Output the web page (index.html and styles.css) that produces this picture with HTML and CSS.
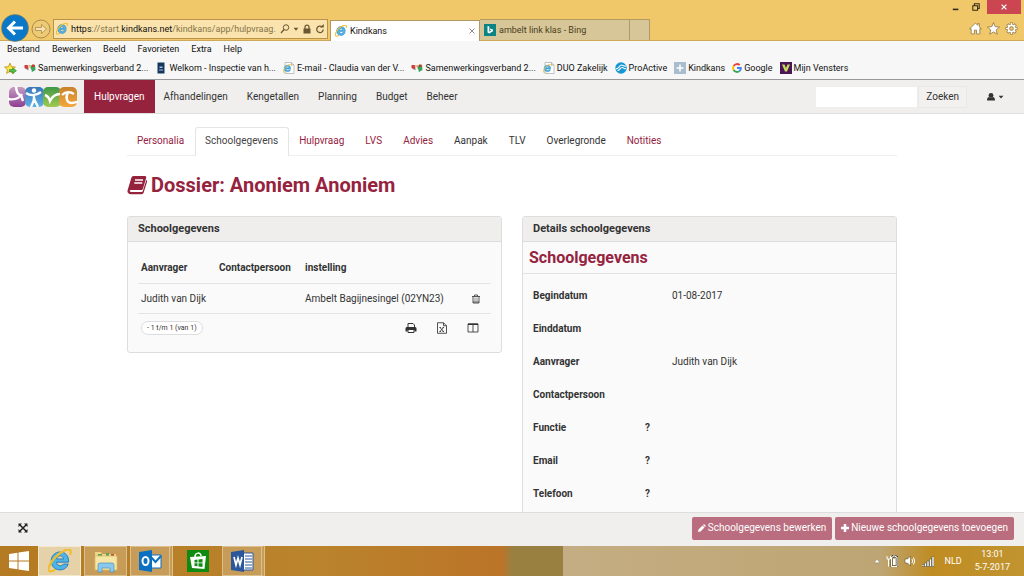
FILE: index.html
```html
<!DOCTYPE html>
<html lang="nl">
<head>
<meta charset="utf-8">
<title>Kindkans</title>
<link rel="stylesheet" href="styles.css">
</head>
<body>
<svg class="defs" aria-hidden="true">
  <symbol id="ie" viewBox="2 2 21 21">
    <path d="M20 13.500H9.500c.2 2 1.500 3.200 3.200 3.200 1.300 0 2.200-.5 2.800-1.500h4.200C18.600 18.500 16 20.300 12.600 20.300 8 20.300 4.800 17 4.800 12.500S8.100 4.600 12.600 4.600c4.800 0 7.700 3.500 7.400 8.900zM9.600 10.700h6c-.2-1.700-1.400-2.700-3-2.700s-2.700 1-3 2.700z" fill="#4db4e8" stroke="#1f79bd" stroke-width=".8"/>
    <path d="M21.500 6.500c1.500-3.500-.5-5.300-4.500-3.500C10 6 4 13 2.600 18.300c-.8 3.300 1.600 4.300 5.400 2" fill="none" stroke="#f2bd2c" stroke-width="1.900" stroke-linecap="round"/>
  </symbol>
  <symbol id="page-ie" viewBox="0 0 24 24">
    <path d="M4 1h13l5 5v17H4z" fill="#fff" stroke="#888"/>
    <path d="M17 1v5h5" fill="#ddd" stroke="#888"/>
    <use href="#ie" x="0" y="4" width="18" height="18"/>
  </symbol>
  <symbol id="swv" viewBox="0 0 24 24">
    <path d="M1 6h7l2 6-4 3-5-3z" fill="#d43a3a"/><path d="M7 6h8l-2 8-4-2z" fill="#e8b98a"/><path d="M14 7l8-1 1 10-7 4-3-6z" fill="#39a35c"/><path d="M3 13l4-1 3 5z" fill="#777"/><path d="M16 5h5v5h-5z" fill="#c33"/><path d="M9 9l6 8" stroke="#fff" stroke-width="2"/>
  </symbol>
</svg>

<header class="browser">
  <div class="titlebar">
    <button class="back" aria-label="Vorige"><svg viewBox="0 0 28 28"><circle cx="14" cy="14" r="13.500" fill="#0a78c8" stroke="#8a7a4a" stroke-width=".6"/><path d="M22 14H8M14 7.500L7.500 14l6.500 6.500" fill="none" stroke="#fff" stroke-width="3"/></svg></button>
    <button class="forward" aria-label="Volgende"><svg viewBox="0 0 20 20"><circle cx="10" cy="10" r="9" fill="#efca74" stroke="#a98b4a"/><path d="M4.500 8.500h6V5.500l5 4.500-5 4.500v-3h-6z" fill="#f7e2b0" stroke="#a98b4a" stroke-width=".8"/></svg></button>
    <div class="address">
      <svg class="i12"><use href="#ie"/></svg>
      <span class="url"><b>https</b>://start.<b>kindkans.net</b>/kindkans/app/hulpvraag.</span>
      <svg class="i10" viewBox="0 0 20 20"><circle cx="12" cy="7" r="5.500" fill="none" stroke="#6a5630" stroke-width="2"/><path d="M8 11l-6 7" stroke="#6a5630" stroke-width="2.500"/></svg>
      <svg class="i6" viewBox="0 0 10 10"><path d="M1 3h8L5 8z" fill="#6a5630"/></svg>
      <svg class="i10" viewBox="0 0 20 20"><path d="M3 9h14v10H3z" fill="#6a5630"/><path d="M6 10V6a4 4 0 018 0v4" fill="none" stroke="#6a5630" stroke-width="2.500"/></svg>
      <svg class="i10" viewBox="0 0 20 20"><path d="M16.500 11a6.500 6.500 0 11-2.500-5.500" fill="none" stroke="#6a5630" stroke-width="2.500"/><path d="M10 7h7.500V0z" fill="#6a5630"/></svg>
    </div>
    <div class="btab current"><svg class="i12"><use href="#ie"/></svg><span>Kindkans</span><button aria-label="Tabblad sluiten"><svg class="i6" viewBox="0 0 10 10"><path d="M1 1l8 8M9 1L1 9" stroke="#888" stroke-width="1.600"/></svg></button></div>
    <div class="btab"><svg class="i12" viewBox="0 0 24 24"><path d="M0 0h24v24H0z" fill="#0c8484"/><path d="M7 4l3.500 1.200v10L15 13l-2.500-1-1.200-3.200L18 11v3.500L10.500 19 7 17z" fill="#fff"/></svg><span>ambelt link klas - Bing</span></div>
    <button class="newtab" aria-label="Nieuw tabblad"></button>
    <div class="window">
      <div class="wbuttons">
        <button aria-label="Minimaliseren"><svg class="i8" viewBox="0 0 10 10"><path d="M1 8h7" stroke="#332a18" stroke-width="2"/></svg></button>
        <button aria-label="Vorig formaat"><svg class="i8" viewBox="0 0 10 10"><path d="M1 3.500h6v5.500H1zM3 3V1h6v6H7.500" fill="none" stroke="#332a18" stroke-width="1.300"/></svg></button>
        <button class="close" aria-label="Sluiten"><svg class="i8" viewBox="0 0 10 10"><path d="M2 2l6 6M8 2L2 8" stroke="#fff" stroke-width="1.500"/></svg></button>
      </div>
      <div class="tools">
        <svg class="i13" viewBox="0 0 24 24"><path d="M12 2L1 12.500h3V22h6v-7h4v7h6v-9.500h3L19 9V3h-3v3z" fill="#fff" stroke="#8c7644" stroke-width="1.500"/></svg>
        <svg class="i13" viewBox="0 0 24 24"><path d="M12 1l3.200 7.700 8 .6-6.200 5.300 2 8L12 18.300 5 22.600l2-8L.8 9.300l8-.6z" fill="#fff" stroke="#8c7644" stroke-width="1.500"/></svg>
        <svg class="i13" viewBox="0 0 24 24"><g fill="none"><path d="M12 1v22M1 12h22M4.200 4.200l15.600 15.600M19.800 4.200L4.200 19.800" stroke="#8c7644" stroke-width="5.500"/><path d="M12 2v20M2 12h20M5 5l14 14M19 5L5 19" stroke="#fff" stroke-width="3"/></g><circle cx="12" cy="12" r="7" fill="#fff"/><circle cx="12" cy="12" r="3.500" fill="#f0c869" stroke="#8c7644" stroke-width="1.500"/></svg>
      </div>
    </div>
  </div>
  <div class="menubar"><button>Bestand</button><button>Bewerken</button><button>Beeld</button><button>Favorieten</button><button>Extra</button><button>Help</button></div>
  <div class="favorites">
    <svg class="i13" viewBox="0 0 24 24"><path d="M11 2l2.800 6.700 7.200.6-5.500 4.700 1.700 7L11 17.300 4.800 21l1.700-7L1 9.300l7.200-.6z" fill="#ffe84a" stroke="#c28a10" stroke-width="1.500"/><path d="M10 14h6v-3.500l7 5.500-7 5.500V18h-6z" fill="#52c04a" stroke="#1f8020"/></svg>
    <a href="#"><svg class="i12"><use href="#swv"/></svg>Samenwerkingsverband 2...</a>
    <a href="#"><svg class="i12" viewBox="0 0 24 24"><path d="M5 1h14v22H5z" fill="#17365f"/><path d="M9 9h6v3H9zM8 15h8v2H8z" fill="#a9c1dc"/></svg>Welkom - Inspectie van h...</a>
    <a href="#"><svg class="i12"><use href="#page-ie"/></svg>E-mail - Claudia van der V...</a>
    <a href="#"><svg class="i12"><use href="#swv"/></svg>Samenwerkingsverband 2...</a>
    <a href="#"><svg class="i12"><use href="#page-ie"/></svg>DUO Zakelijk</a>
    <a href="#"><svg class="i12" viewBox="0 0 24 24"><circle cx="12" cy="12" r="11.500" fill="#1597d4"/><path d="M1 14c7 0 8-8 12-8 3 0 4 3 9 2M5 17c5 0 5-6 9-6s3 4 8 2" fill="none" stroke="#fff" stroke-width="2.200"/></svg>ProActive</a>
    <a href="#"><svg class="i12" viewBox="0 0 24 24"><path d="M0 0h24v24H0z" fill="#a9bccb"/><path d="M12 5v14M5 12h14" stroke="#fff" stroke-width="3"/></svg>Kindkans</a>
    <a href="#"><svg class="i10" viewBox="0 0 24 24"><g fill="none" stroke-width="4.500"><path d="M4 7a9.500 9.500 0 0114.500-2" stroke="#ea4335"/><path d="M4 7a10 10 0 000 10" stroke="#fbbc05"/><path d="M4 17a9.500 9.500 0 0014 2.500" stroke="#34a853"/><path d="M18 19.500a9 9 0 003.300-7.500H12" stroke="#4285f4"/></g></svg>Google</a>
    <a href="#"><svg class="i12" viewBox="0 0 24 24"><path d="M0 0h24v24H0z" fill="#4b1556"/><path d="M4 5h5l3 7 3-7h5l-6 14h-4z" fill="#c6dc58"/></svg>Mijn Vensters</a>
  </div>
</header>

<nav class="mainnav">
  <a class="logo" href="#" aria-label="Kindkans"><svg viewBox="0 0 70 22">
    <defs>
      <linearGradient id="g1" x2="0" y2="1"><stop stop-color="#c49cc0"/><stop offset="1" stop-color="#8d3f92"/></linearGradient>
      <linearGradient id="g2" x2="0" y2="1"><stop stop-color="#3a76bb"/><stop offset="1" stop-color="#5cb2e6"/></linearGradient>
      <linearGradient id="g3" x2="0" y2="1"><stop stop-color="#3f9848"/><stop offset="1" stop-color="#a0cb50"/></linearGradient>
      <linearGradient id="g4" x2="0" y2="1"><stop stop-color="#c9812c"/><stop offset="1" stop-color="#f3a83c"/></linearGradient>
    </defs>
    <rect x="1" y="1" width="17" height="20" rx="5" fill="url(#g1)"/><rect x="17" y="1" width="19" height="20" rx="5" fill="url(#g2)"/><rect x="35" y="1" width="18" height="20" rx="5" fill="url(#g3)"/><rect x="51" y="1" width="18" height="20" rx="5" fill="url(#g4)"/>
    <g fill="none" stroke="#fff" stroke-width="2.400"><path d="M8 0c0 5 2 9 6 10M0 13c6 1 11 0 14-5M13 9l2 6"/><path d="M18 7c4 3 10 3 15-1M26 9v5M26 12c0 4-2 6-3 9M26 12c1 4 3 6 4 9"/><path d="M37 9c3 1 4 3 5 6 2-4 6-7 10-7"/><path d="M54 9c4-4 9-3 12-1M60 7c-3 4-1 10 3 10 3 0 5-1 7-1"/></g><circle cx="26" cy="4.500" r="2.200" fill="#fff"/>
  </svg></a>
  <a class="active" href="#">Hulpvragen</a><a href="#">Afhandelingen</a><a href="#">Kengetallen</a><a href="#">Planning</a><a href="#">Budget</a><a href="#">Beheer</a>
  <form class="search"><input type="text" aria-label="Zoekterm"><button type="button">Zoeken</button></form>
  <button class="user" aria-label="Gebruiker"><svg class="i8" viewBox="0 0 20 20"><circle cx="10" cy="6" r="6" fill="#333"/><path d="M0 19c0-6 2-9 5-9 2 2 8 2 10 0 3 0 5 3 5 9z" fill="#333"/></svg><svg class="i6" viewBox="0 0 10 10"><path d="M1 3h8L5 7.500z" fill="#333"/></svg></button>
</nav>

<main>
  <div class="container">
    <nav class="tabs"><a href="#">Personalia</a><a class="selected" href="#">Schoolgegevens</a><a href="#">Hulpvraag</a><a href="#">LVS</a><a href="#">Advies</a><a class="dark" href="#">Aanpak</a><a class="dark" href="#">TLV</a><a class="dark" href="#">Overlegronde</a><a href="#">Notities</a></nav>
    <h1><svg viewBox="0 0 20 20"><path d="M6.500 1h11.200c1.300 0 1.800.9 1.500 2l-3.200 10.500c-.3 1-1 1.500-2 1.500H4c-1 0-1.400.5-1.200 1.200.2.600.8.800 1.600.8h10.200c.7 0 1-.3 1.200-.9L19.300 5c1 .4.900 1.200.7 2l-3.300 10.500c-.3 1-1.100 1.700-2.200 1.700H3.800C1.500 19.200 0 17.200.6 15.300L4.300 3C4.700 1.800 5.400 1 6.500 1z" fill="#96233e"/><path d="M8 5h8M7.300 8h8" stroke="#fff" stroke-width="1.300"/></svg>Dossier: Anoniem Anoniem</h1>
    <div class="panels">
      <section class="panel">
        <h2>Schoolgegevens</h2>
        <div class="listing">
          <table>
            <thead><tr><th class="c1">Aanvrager</th><th class="c2">Contactpersoon</th><th>instelling</th><th class="c4"></th></tr></thead>
            <tbody><tr><td>Judith van Dijk</td><td></td><td>Ambelt Bagijnesingel (02YN23)</td><td><button aria-label="Verwijderen"><svg class="i10" viewBox="0 0 20 20"><path d="M2 5h16M7 5V2h6v3M4 5v13h12V5M4 16h12" fill="none" stroke="#444" stroke-width="1.800"/><path d="M8 7v8M12 7v8" stroke="#444" stroke-width="1.200"/></svg></button></td></tr></tbody>
          </table>
          <div class="tablefoot">
            <span class="pager">- 1 t/m 1 (van 1)</span>
            <button aria-label="Afdrukken"><svg class="i12" viewBox="0 0 24 24"><path d="M6 11V3h10l3 3v5" fill="none" stroke="#333" stroke-width="2"/><path d="M3 10h18l2 2v7h-4v-3H5v3H1v-7z" fill="#333"/><path d="M6 16v5h12v-5" fill="#fff" stroke="#333" stroke-width="2"/></svg></button>
            <button aria-label="Exporteren naar Excel"><svg class="i12" viewBox="0 0 24 24"><path d="M3 1.500h12l6 6v15H3zM15 1.500v6h6M8 11l7 8M15 11l-7 8M7 11h3M13 11h3M7 19h3M13 19h3" fill="none" stroke="#333" stroke-width="1.700"/></svg></button>
            <button aria-label="Kolommen"><svg class="i12" viewBox="0 0 24 24"><path d="M2 4h20v16H2zM12 4v16" fill="none" stroke="#333" stroke-width="1.700"/><path d="M2 4.500h20" stroke="#333" stroke-width="3"/></svg></button>
          </div>
        </div>
      </section>
      <section class="panel">
        <h2>Details schoolgegevens</h2>
        <h3>Schoolgegevens</h3>
        <dl>
          <div><dt>Begindatum</dt><dd>01-08-2017</dd></div>
          <div><dt>Einddatum</dt><dd></dd></div>
          <div><dt>Aanvrager</dt><dd>Judith van Dijk</dd></div>
          <div><dt>Contactpersoon</dt><dd></dd></div>
          <div><dt>Functie<span>?</span></dt><dd></dd></div>
          <div><dt>Email<span>?</span></dt><dd></dd></div>
          <div><dt>Telefoon<span>?</span></dt><dd></dd></div>
        </dl>
      </section>
    </div>
  </div>
</main>

<footer class="actions">
  <button class="expand" aria-label="Volledig scherm"><svg class="i10" viewBox="0 0 20 20"><path d="M4 4l12 12M16 4L4 16" stroke="#222" stroke-width="3"/><path d="M1 1h7L1 8zM19 1v7l-7-7zM1 19v-7l7 7zM19 19h-7l7-7z" fill="#222"/></svg></button>
  <button class="primary"><svg class="i8" viewBox="0 0 16 16"><path d="M0 16l1-5 8-8 4 4-8 8zM10 2l1.500-1.500c1-1 4 2 4 3.500L14 6z" fill="#fff"/></svg>Schoolgegevens bewerken</button>
  <button class="primary"><svg class="i8" viewBox="0 0 16 16"><path d="M8 0v16M0 8h16" stroke="#fff" stroke-width="5"/></svg>Nieuwe schoolgegevens toevoegen</button>
</footer>

<footer class="taskbar">
  <button class="start" aria-label="Start"><svg viewBox="0 0 20 20"><path d="M0 3l8.500-1.200v7.700H0zM9.500 1.600L20 0v9.500H9.500zM0 10.500h8.500v7.700L0 17zM9.500 10.500H20V20L9.500 18.400z" fill="#fff"/></svg></button>
  <button class="app front" aria-label="Internet Explorer"><svg><use href="#ie"/></svg></button>
  <button class="app open" aria-label="Verkenner"><svg viewBox="0 0 24 24"><path d="M1 3h6l1 2h14v15H1z" fill="#edd486"/><path d="M4 5h4v2H4zM12 4h3v3h-3z" fill="#5fa264"/><path d="M17 5h3v3h-3z" fill="#b8503c"/><path d="M1 7h22v14H1z" fill="#f5e6a5" stroke="#d9bd62" stroke-width=".8"/><path d="M4 23v-7q0-2 2-2h12q2 0 2 2v7h-4v-4H8v4z" fill="#8cc8ec" stroke="#4c8fc1" stroke-width=".7"/></svg></button>
  <button class="app open stack" aria-label="Outlook"><svg viewBox="0 0 24 24"><path d="M12 6h11v13H12z" fill="#fff" stroke="#0b6fc2"/><path d="M12 7l5.500 6L23 7" fill="none" stroke="#0b6fc2" stroke-width="2"/><path d="M1 3l13-2v22L1 21z" fill="#0b6fc2"/><ellipse cx="7.500" cy="12" rx="3" ry="4" fill="none" stroke="#fff" stroke-width="2"/></svg></button>
  <button class="app" aria-label="Store"><svg viewBox="0 0 24 24"><path d="M1 1h22v22H1z" fill="#108a10"/><path d="M4 8l16-1-1.500 13L6 19z" fill="#fff"/><path d="M9 8c0-5 6-5 6-1" fill="none" stroke="#fff" stroke-width="1.500"/><path d="M8.500 11l3-.4v2.900h-3zM12.500 10.500l4-.5v3.500h-4zM8.500 14.300h3v3l-3-.4zM12.500 14.300h4v3.600l-4-.5z" fill="#108a10"/></svg></button>
  <button class="app open stack" aria-label="Word"><svg viewBox="0 0 24 24"><path d="M12 4h11v17H12z" fill="#fff" stroke="#2b579a"/><path d="M15 7h7M15 10h7M15 13h7M15 16h7M15 19h7" stroke="#2b579a"/><path d="M1 3l13-2v22L1 21z" fill="#2b579a"/><path d="M4 8l2 8 2-7 2 7 2-8" fill="none" stroke="#fff" stroke-width="1.700"/></svg></button>
  <div class="tray">
    <svg class="i6" viewBox="0 0 10 10"><path d="M0 8h10L5 2z" fill="#fff" stroke="#665" stroke-width=".6"/></svg>
    <svg class="i12" viewBox="0 0 24 24"><path d="M11 4h3V2h5v2h3v19H11z" fill="none" stroke="#443" stroke-width="4"/><path d="M11 4h3V2h5v2h3v19H11zM5 12v11M2 2v6h7V2M5 8v5" fill="none" stroke="#fff" stroke-width="2"/><path d="M14 7h5v13h-5z" fill="#fff"/></svg>
    <svg class="i12" viewBox="0 0 24 24"><path d="M2 8h5l6-6v20l-6-6H2z" fill="#fff" stroke="#443"/><path d="M16 8q3 4 0 8M19 5q5 7 0 14" fill="none" stroke="#fff" stroke-width="2"/></svg>
    <svg class="i12" viewBox="0 0 24 24"><path d="M0 19h4v4H0zM5 16h4v7H5zM10 12h4v11h-4zM15 8h4v15h-4zM20 3h4v20h-4z" fill="#fff" stroke="#554" stroke-width="1.200"/></svg>
    <span class="lang">NLD</span>
    <time>13:01<br>5-7-2017</time>
  </div>
</footer>
</body>
</html>
```
FILE: styles.css
```css
* { box-sizing: border-box; }
body { margin: 0; height: 100vh; display: flex; flex-direction: column; overflow: hidden; background: #fff; color: #333; font: 10px/16px Roboto, "Noto Sans", sans-serif; }
button { font: inherit; color: inherit; background: none; border: 0; padding: 0; display: flex; align-items: center; justify-content: center; }
a { color: inherit; text-decoration: none; }
svg { display: block; flex: none; }
.defs { position: absolute; width: 0; height: 0; }
.i6 { width: 6px; height: 6px; }
.i8 { width: 8px; height: 8px; }
.i10 { width: 10px; height: 10px; }
.i12 { width: 12px; height: 12px; }
.i13 { width: 13px; height: 13px; }

.browser { flex: none; background: #f7f7f7; border-bottom: 1px solid #999; font-size: 9px; line-height: 12px; color: #111; }
.titlebar { display: flex; align-items: flex-end; height: 41px; background: #f0c869; border-bottom: 1px solid #cfa95a; padding: 0 3px 0 1px; }
.back svg { width: 28px; height: 28px; }
.back { margin-bottom: -2px; }
.forward svg { width: 20px; height: 20px; }
.forward { margin: 0 2px 1px; }
.address { display: flex; align-items: center; gap: 3px; width: 275px; height: 20px; margin: 0 2px 1px 0; padding: 0 2px; border: 1px solid #b9924c; background: #fae3ad; }
.url { flex: 1; white-space: nowrap; color: #857549; }
.url b { font-weight: 400; color: #111; }
.btab { display: flex; align-items: center; gap: 3px; width: 150px; height: 21px; padding: 0 4px; background: #d7c697; border: 1px solid #b39a62; border-left-width: 0; border-bottom: 0; color: #4a3e22; }
.btab.current { background: #fff; color: #111; margin-bottom: -1px; border-left-width: 1px; }
.btab button { margin-left: auto; }
.newtab { width: 20px; height: 21px; background: #d7c697; border: 1px solid #b39a62; border-width: 1px 1px 0 0; }
.window { margin-left: auto; align-self: stretch; display: flex; flex-direction: column; align-items: flex-end; justify-content: space-between; }
.wbuttons { display: flex; align-items: center; gap: 12px; }
.wbuttons .close { width: 34px; height: 14px; background: #cb4650; margin-left: -5px; }
.tools { display: flex; gap: 5px; padding: 0 3px 5px 0; }
.menubar { display: flex; gap: 12px; padding: 2px 7px 0; }
.favorites { display: flex; align-items: center; gap: 7px; height: 24px; padding: 2px 4px 0; white-space: nowrap; }
.favorites a { display: flex; align-items: center; gap: 2px; }

.mainnav { flex: none; display: flex; align-items: stretch; height: 34px; background: #f0efee; border-bottom: 1px solid #e0e0e0; }
.mainnav > a { display: flex; align-items: center; padding: 0 10px 0 9px; }
.mainnav > .logo { padding: 0 6px 0 8px; }
.logo svg { width: 70px; height: 22px; }
.mainnav > .active { background: #96233e; color: #fff; padding: 0 10px; }
.search { display: flex; align-items: center; margin-left: auto; }
.search input { width: 103px; height: 22px; border: 1px solid #eee; background: #fff; }
.search button { height: 22px; padding: 0 7px; border: 1px solid #e8e8e8; background: #f2f1f0; }
.user { gap: 3px; padding: 0 20px; }

main { flex: 1; min-height: 0; overflow: hidden; }
.container { width: calc(75% + 2px); margin: 0 auto; padding-top: 13px; }
.tabs { display: flex; border-bottom: 1px solid #eee; color: #96233e; }
.tabs a { padding: 5px 10px 6px 9px; border: 1px solid transparent; border-bottom: 0; }
.tabs .dark { color: #333; }
.tabs .selected { color: #444; background: #fff; border-color: #e4e4e4; border-radius: 3px 3px 0 0; margin-bottom: -1px; }
h1, h2, h3, dl, dd { margin: 0; }
h1 { display: flex; align-items: center; gap: 4px; margin: 14px 0 16px; font-size: 20px; line-height: 30px; color: #96233e; }
h1 svg { width: 20px; height: 20px; }
.panels { display: grid; grid-template-columns: 1fr 1fr; gap: 20px; align-items: start; }
.panel { background: #fafafa; border: 1px solid #ddd; border-radius: 3px; }
h2 { padding: 4px 10px; font-size: 11px; line-height: 16px; background: #efeeed; border-bottom: 1px solid #ddd; }
h3 { padding: 4px 6px 3px; font-size: 16px; line-height: 24px; color: #96233e; border-bottom: 1px solid #e2e2e2; }
.listing { padding: 10px; }
table { width: 100%; border-collapse: collapse; table-layout: fixed; }
th, td { padding: 7px 3px 6px; text-align: left; border-bottom: 1px solid #e4e4e4; white-space: nowrap; }
th { padding: 8px 3px 7px; }
td button { margin-left: -3px; }
.c1 { width: 78px; }
.c2 { width: 86px; }
.c4 { width: 20px; }
.tablefoot { display: flex; align-items: center; gap: 19px; padding: 7px 12px 7px 3px; }
.pager { margin-right: auto; padding: 0 5px; border: 1px solid #ddd; border-radius: 8px; font-size: 7px; line-height: 12px; background: #fff; }
dl { padding: 5px 10px; }
dl > div { display: flex; height: 33px; align-items: center; }
dt { display: flex; width: 139px; padding-right: 22px; justify-content: space-between; font-weight: 700; }
.actions { flex: none; display: flex; align-items: center; gap: 3px; height: 34px; padding: 0 10px 3px 18px; background: #f0efee; border-top: 1px solid #ddd; }
.expand { margin-right: auto; }
.primary { gap: 2px; height: 23px; padding: 0 6px; border-radius: 2px; background: #b96d7e; color: #fff; }

.taskbar { flex: none; display: flex; align-items: stretch; height: 30px; background: linear-gradient(90deg, #b47a22, #ba842c 30%, #bb7428 49%, #9a8040 50%, #9a8040 55%, #c4ad82 55%, #bea574 86%, #bf8c22 91%, #c19430); color: #fff; font-size: 9px; line-height: 13px; }
.start { width: 38px; }
.start svg { width: 20px; height: 20px; }
.app { width: 43px; margin-right: 3px; border: 1px solid transparent; }
.app svg { width: 24px; height: 24px; }
.app.open { background: #c79c58; border-color: #dcc08c; }
.app.stack { border-right: 4px double #dcc08c; }
.app.front { background: #e6d2a8; border-color: #f4e8cc; }
.tray { display: flex; align-items: center; gap: 6px; margin-left: auto; padding-right: 14px; }
.tray .lang { margin: 0 7px 0 4px; }
.tray time { text-align: center; }
```
